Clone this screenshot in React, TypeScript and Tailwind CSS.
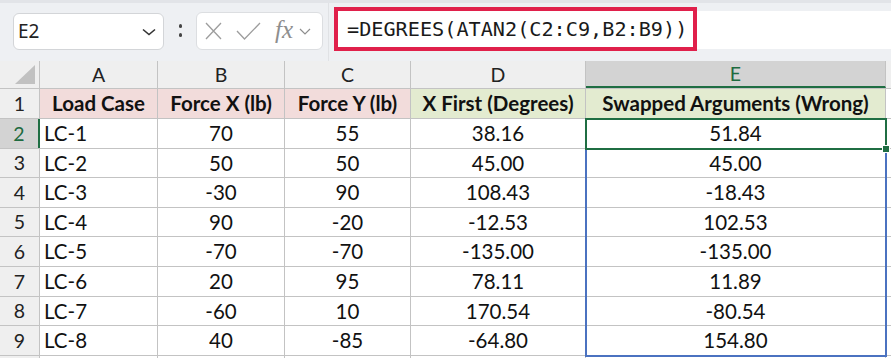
import React from "react";

const cols = ["A", "B", "C", "D", "E"];
const colW = ["w-[118px]", "w-[127px]", "w-[126px]", "w-[175px]", "w-[300px]"];
const headBg = ["bg-[#f2dcdb]", "bg-[#f2dcdb]", "bg-[#f2dcdb]", "bg-[#e3ebd0]", "bg-[#e3ebd0]"];
const headers = ["Load Case", "Force X (lb)", "Force Y (lb)", "X First (Degrees)", "Swapped Arguments (Wrong)"];

const data = [
  ["LC-1", "70", "55", "38.16", "51.84"],
  ["LC-2", "50", "50", "45.00", "45.00"],
  ["LC-3", "-30", "90", "108.43", "-18.43"],
  ["LC-4", "90", "-20", "-12.53", "102.53"],
  ["LC-5", "-70", "-70", "-135.00", "-135.00"],
  ["LC-6", "20", "95", "78.11", "11.89"],
  ["LC-7", "-60", "10", "170.54", "-80.54"],
  ["LC-8", "40", "-85", "-64.80", "154.80"],
];
const rowH = ["h-[30px]", "h-[29px]", "h-[30px]", "h-[29px]", "h-[30px]", "h-[30px]", "h-[29px]", "h-[30px]"];

const line = "border-[#c3c3c3]";

const FormulaBar = () => (
  <div className="flex h-[61px] bg-[#eef0f3] border-t-[3px] border-[#e2e4e8] font-['Noto_Sans',sans-serif]">
    {/* name box */}
    <div className="ml-[13px] mt-[10px] w-[151px] h-[37px] rounded-[6px] border border-[#d3d5d8] bg-white flex items-center justify-between pl-[4px] pr-[7px]">
      <span className="text-[19px] text-[#222]">E2</span>
      <svg width="14" height="8" viewBox="0 0 14 8">
        <path d="M1 1.5 L7 6.5 L13 1.5" fill="none" stroke="#333" strokeWidth="1.6" />
      </svg>
    </div>
    <div className="w-[32px] flex flex-col items-center justify-center gap-[5px] pb-[3px]">
      <span className="w-[3px] h-[4px] rounded-full bg-[#444]" />
      <span className="w-[3px] h-[4px] rounded-full bg-[#444]" />
    </div>
    {/* function buttons */}
    <div className="mt-[9px] w-[127px] h-[38px] rounded-[6px] border border-[#dcdee1] bg-white flex items-center pl-[8px]">
      <svg width="17" height="18" viewBox="0 0 17 18" className="mr-[14px]">
        <path d="M1 1 L16 17 M16 1 L1 17" stroke="#9d9d9d" strokeWidth="1.3" fill="none" />
      </svg>
      <svg width="25" height="18" viewBox="0 0 25 18" className="mr-[14px]">
        <path d="M1 9 L8.5 17 L24 1" stroke="#9d9d9d" strokeWidth="1.3" fill="none" />
      </svg>
      <span className="font-['Liberation_Serif',serif] italic text-[25px] leading-none text-[#8e8e8e] mr-[6px] -mt-[3px]">
        fx
      </span>
      <svg width="12" height="7" viewBox="0 0 12 7">
        <path d="M1 1 L6 6 L11 1" fill="none" stroke="#8e8e8e" strokeWidth="1.2" />
      </svg>
    </div>
    <div className="w-[11px] flex justify-center">
      <div className="w-px h-full bg-[#e0e2e5]" />
    </div>
    {/* formula */}
    <div className="flex-1 mt-[8px] h-[38px] bg-white">
      <div className="-mt-[4px] h-[44px] w-[363px] border-4 border-[#e0204b] flex items-center pl-[9px]">
        <span className="font-['DejaVu_Sans_Mono',monospace] text-[20.2px] text-[#1a1a1a]">
          =DEGREES(ATAN2(C2:C9,B2:B9))
        </span>
      </div>
    </div>
  </div>
);

const App = () => {
  return (
    <div className="w-[891px] h-[358px] overflow-hidden bg-white font-['Lato',sans-serif] text-[20.5px] text-[#111]">
      <FormulaBar />
      {/* column headers */}
      <div className={`flex h-[28px] bg-[#efefef] border-b ${line} text-[19.5px]`}>
        <div className={`w-[40px] shrink-0 border-r ${line} relative flex items-end justify-end pr-[4px] pb-[4px]`}>
          <svg width="20" height="19" viewBox="0 0 20 19">
            <path d="M20 0 L20 19 L0 19 Z" fill="#c1c1c1" />
          </svg>
        </div>
        {cols.map((c, i) => (
          <div
            key={c}
            className={`${colW[i]} shrink-0 border-r ${line} flex items-center justify-center ${
              c === "E" ? "bg-[#d3d3d3] text-[#1e6b40] border-b-2 border-b-[#1f6e43]" : "text-[#222]"
            }`}
          >
            {c}
          </div>
        ))}
        <div className="flex-1" />
      </div>
      {/* row 1 */}
      <div className={`flex h-[30px] border-b ${line}`}>
        <div className={`w-[40px] shrink-0 bg-[#efefef] border-r ${line} flex items-center justify-center text-[#222] text-[19.5px]`}>1</div>
        {headers.map((h, i) => (
          <div key={h} className={`${colW[i]} shrink-0 ${headBg[i]} border-r ${line} flex items-center justify-center font-bold whitespace-nowrap`}>
            {h}
          </div>
        ))}
        <div className="flex-1" />
      </div>
      {data.map((r, ri) => (
        <div key={ri} className={`flex ${rowH[ri]} border-b ${line}`}>
          <div
            className={`w-[40px] shrink-0 border-r flex items-center justify-center text-[19.5px] ${
              ri === 0
                ? "bg-[#d3d3d3] text-[#1e6b40] border-r-2 border-r-[#1f6e43]"
                : `bg-[#efefef] text-[#222] ${line}`
            }`}
          >
            {ri + 2}
          </div>
          {r.map((v, ci) => (
            <div
              key={ci}
              className={`${colW[ci]} shrink-0 border-r ${line} flex items-center ${
                ci === 0 ? "justify-start pl-[4px]" : "justify-center"
              } ${ci === 4 && ri === 0 ? "relative" : ""}`}
            >
              {v}
              {ci === 4 && ri === 0 && (
                <>
                  {/* spill range border */}
                  <div className="absolute -left-px -top-px w-[302px] h-[239px] border-2 border-[#4b72c0] z-10 pointer-events-none" />
                  {/* active cell */}
                  <div className="absolute -left-px -top-px w-[302px] h-[32px] border-2 border-[#1f6e43] z-20 pointer-events-none" />
                  <div className="absolute right-[-5px] bottom-[-5px] w-[8px] h-[8px] bg-[#1f6e43] border border-white z-30" />
                </>
              )}
            </div>
          ))}
          <div className="flex-1" />
        </div>
      ))}
      <div className="flex h-[10px]">
        <div className={`w-[40px] shrink-0 bg-[#efefef] border-r ${line}`} />
        {cols.map((c, i) => (
          <div key={c} className={`${colW[i]} shrink-0 border-r ${line}`} />
        ))}
      </div>
    </div>
  );
};

export default App;
